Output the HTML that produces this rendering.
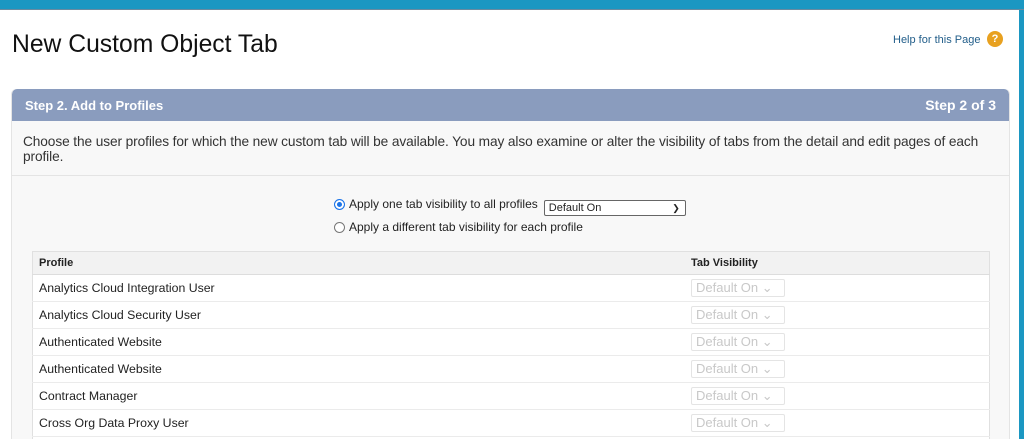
<!DOCTYPE html>
<html style="overflow:hidden;height:439px"><head><style>
body{margin:0;width:1024px;height:439px;overflow:hidden;background:#1b97c2;font-family:"Liberation Sans",Arial,sans-serif;position:relative}
.top{position:absolute;left:0;top:0;width:1024px;height:9px;background:#1b97c2;border-bottom:1px solid #6a8aa0}
.page{position:absolute;left:0;top:10px;width:1019px;height:429px;background:#fff;overflow:hidden}
h1{position:absolute;left:12px;top:21px;margin:0;font-weight:normal;font-size:24.7px;color:#111}
.help{position:absolute;left:893px;top:24px;font-size:11px;color:#225e8a}
.q{position:absolute;left:987px;top:21px;width:16px;height:16px;border-radius:50%;background:#e8a120;color:#fff;font-size:11px;font-weight:bold;text-align:center;line-height:16px}
.card{position:absolute;left:11px;top:79px;width:997px;height:350px;overflow:hidden;background:#f8f8f8;border:1px solid #e4e4e4;border-top:none;border-bottom:none;border-radius:5px 5px 0 0}
.hd{height:32px;background:#8a9cbe;border-radius:5px 5px 0 0;color:#fff;font-weight:bold;font-size:13px;line-height:33px;padding:0 13px}
.hd span{float:right;font-size:14px}
.desc{padding:13px 11px 0;font-size:13.7px;color:#333;line-height:15px;height:41px;border-bottom:1px solid #e4e4e4;letter-spacing:-0.1px}
.rad{position:absolute;left:322px;font-size:12px;color:#222}
.rad i{display:inline-block;width:11px;height:11px;border-radius:50%;border:1px solid #777;background:#fff;vertical-align:-2px;margin-right:4px;box-sizing:border-box}
.rad i.on{border:1px solid #1a73e8;box-shadow:inset 0 0 0 2px #fff;background:#1a73e8}
.sel{display:inline-block;width:136px;height:14px;border:1px solid #666;border-radius:2px;font-size:11px;line-height:14px;padding-left:4px;vertical-align:-3px;background:#fff;position:relative;margin-left:6px}
table{position:absolute;left:20px;top:162px;width:958px;border-collapse:collapse;background:#fff;border:1px solid #e0e0e0;font-size:12.3px;color:#222}
th{background:#f2f2f2;text-align:left;font-size:11px;height:22px;padding:0 6px;border-bottom:1px solid #ddd}
td{height:26px;padding:0 6px;border-bottom:1px solid #ebebeb}
.ds{display:inline-block;width:88px;height:16px;border:1px solid #e4e4e4;border-radius:2px;color:#c8c8c8;font-size:13px;line-height:16px;padding-left:4px;position:relative}
</style></head><body>
<div class="top"></div>
<div class="page">
<h1>New Custom Object Tab</h1>
<div class="help">Help for this Page</div><div class="q">?</div>
<div class="card">
<div class="hd">Step 2. Add to Profiles<span>Step 2 of 3</span></div>
<div class="desc">Choose the user profiles for which the new custom tab will be available. You may also examine or alter the visibility of tabs from the detail and edit pages of each profile.</div>
<div class="rad" style="top:108px"><i class="on"></i>Apply one tab visibility to all profiles<span class="sel">Default On<span style="position:absolute;right:5px;top:0;font-size:9px">&#10095;</span></span></div>
<div class="rad" style="top:131px"><i></i>Apply a different tab visibility for each profile</div>
<table>
<tr><th style="width:640px">Profile</th><th>Tab Visibility</th></tr>
<tr><td>Analytics Cloud Integration User</td><td><span class="ds">Default On ⌄</span></td></tr>
<tr><td>Analytics Cloud Security User</td><td><span class="ds">Default On ⌄</span></td></tr>
<tr><td>Authenticated Website</td><td><span class="ds">Default On ⌄</span></td></tr>
<tr><td>Authenticated Website</td><td><span class="ds">Default On ⌄</span></td></tr>
<tr><td>Contract Manager</td><td><span class="ds">Default On ⌄</span></td></tr>
<tr><td>Cross Org Data Proxy User</td><td><span class="ds">Default On ⌄</span></td></tr>
<tr><td>&nbsp;</td><td></td></tr>
</table>
</div>
</div>
</body></html>
